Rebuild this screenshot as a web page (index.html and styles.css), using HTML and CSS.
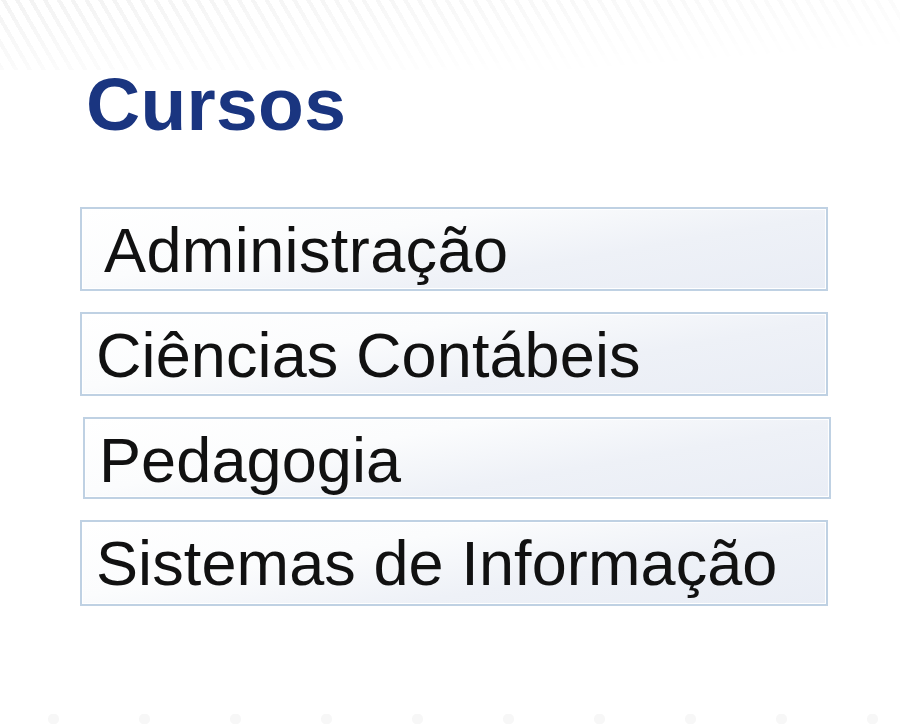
FILE: index.html
```html
<!DOCTYPE html>
<html lang="pt-BR">
<head>
<meta charset="utf-8">
<title>Cursos</title>
<link rel="stylesheet" href="styles.css">
</head>
<body>
<div class="stripes"></div>
<main class="panel">
  <h1 class="title">Cursos</h1>
  <nav class="course-list">
    <a class="course course--wide" href="#">Administração</a>
    <a class="course" href="#">Ciências Contábeis</a>
    <a class="course course--shift" href="#">Pedagogia</a>
    <a class="course course--tall" href="#">Sistemas de Informação</a>
  </nav>
</main>
<div class="dots"></div>
</body>
</html>
```
FILE: styles.css
```css
html, body {
  margin: 0;
  padding: 0;
  background: #ffffff;
}
body {
  width: 900px;
  height: 724px;
  overflow: hidden;
  position: relative;
  font-family: "Liberation Sans", Arial, sans-serif;
}
.stripes {
  position: absolute;
  left: 0;
  top: 0;
  width: 900px;
  height: 70px;
  background: repeating-linear-gradient(60deg, #f3f3f3 0 4px, #ffffff 4px 12px);
  -webkit-mask-image: linear-gradient(to bottom right, rgba(0,0,0,1) 0%, rgba(0,0,0,0.35) 50%, rgba(0,0,0,0) 85%);
  mask-image: linear-gradient(to bottom right, rgba(0,0,0,1) 0%, rgba(0,0,0,0.35) 50%, rgba(0,0,0,0) 85%);
  z-index: 0;
}
.dots {
  position: absolute;
  left: 0;
  bottom: 0;
  width: 900px;
  height: 10px;
  background: radial-gradient(circle, #f7f7f7 0 5px, transparent 6px) 8px 0 / 91px 10px repeat-x;
}
.panel {
  position: relative;
  z-index: 1;
  padding: 66px 0 0 80px;
  display: flex;
  flex-direction: column;
}
.title {
  margin: 0 0 65px 6px;
  font-size: 75px;
  line-height: 76px;
  font-weight: bold;
  color: #1a3580;
  letter-spacing: 0.3px;
}
.course-list {
  display: flex;
  flex-direction: column;
  gap: 21px;
}
.course {
  box-sizing: border-box;
  width: 748px;
  height: 84px;
  padding: 3px 0 0 14px;
  border: 2px solid #bfd1e3;
  box-shadow: inset 0 0 0 1px #ffffff;
  background: linear-gradient(170deg, #ffffff 0%, #fbfcfd 35%, #eef1f7 65%, #e9edf5 100%);
  color: #111111;
  font-size: 63px;
  line-height: 76px;
  letter-spacing: 0.1px;
  text-decoration: none;
  white-space: nowrap;
}
.course--wide {
  padding-left: 22px;
  letter-spacing: 0.4px;
}
.course--shift {
  margin-left: 3px;
  height: 82px;
}
.course--tall {
  height: 86px;
}
```
